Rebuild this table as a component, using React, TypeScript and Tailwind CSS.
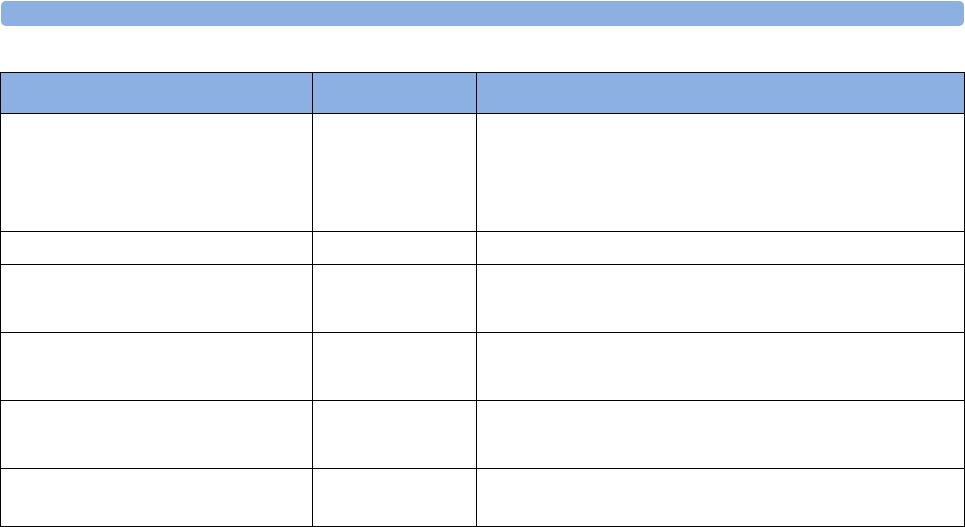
import React from 'react';

// Row heights include each row's bottom border
const rows = [118, 33, 68, 68, 68, 58];

export default function App() {
  return (
    <div className="w-[965px] h-[527px] bg-white overflow-hidden font-['Liberation_Sans',sans-serif]">
      {/* Section heading bar */}
      <div className="ml-px mt-px h-[25px] w-[963px] rounded-[5px] bg-[#8db0e2]" />

      {/* Table */}
      <div className="mt-[46px] w-[965px] border-l border-t border-black">
        <div className="grid grid-cols-[312px_164px_488px]">
          {[0, 1, 2].map((c) => (
            <div key={`h${c}`} className="h-[41px] border-r border-b border-black bg-[#8db0e2]" />
          ))}
          {rows.map((h, r) =>
            [0, 1, 2].map((c) => (
              <div
                key={`${r}-${c}`}
                className="border-r border-b border-black bg-white"
                style={{ height: h }}
              />
            ))
          )}
        </div>
      </div>
    </div>
  );
}
